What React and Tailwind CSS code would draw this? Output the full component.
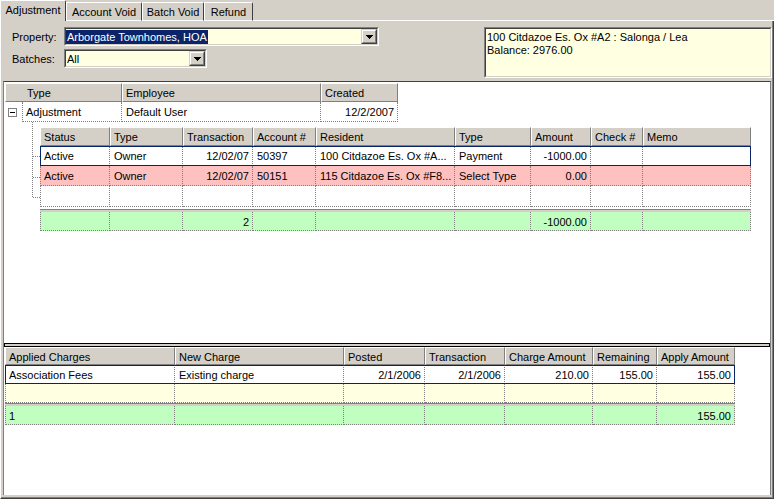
import React from 'react';

const nestedCols = [
  { w: 'w-[70px]', label: 'Status' },
  { w: 'w-[73px]', label: 'Type' },
  { w: 'w-[70px]', label: 'Transaction', right: true },
  { w: 'w-[63px]', label: 'Account #' },
  { w: 'w-[139px]', label: 'Resident' },
  { w: 'w-[76px]', label: 'Type' },
  { w: 'w-[60px]', label: 'Amount', right: true },
  { w: 'w-[52px]', label: 'Check #' },
  { w: 'w-[108px]', label: 'Memo' },
];

const nestedRows = [
  { bg: 'bg-white', sel: true, h: 'h-[20px]', cells: ['Active', 'Owner', '12/02/07', '50397', '100 Citdazoe Es. Ox #A...', 'Payment', '-1000.00', '', ''] },
  { bg: 'bg-[#ffc0c0]', h: 'h-[20px]', cells: ['Active', 'Owner', '12/02/07', '50151', '115 Citdazoe Es. Ox #F8...', 'Select Type', '0.00', '', ''] },
  { bg: 'bg-white', h: 'h-[21px]', cells: ['', '', '', '', '', '', '', '', ''] },
];
const nestedSummary = ['', '', '2', '', '', '', '-1000.00', '', ''];

const lowerCols = [
  { w: 'w-[170px]', label: 'Applied Charges' },
  { w: 'w-[169px]', label: 'New Charge' },
  { w: 'w-[81px]', label: 'Posted', right: true },
  { w: 'w-[80px]', label: 'Transaction', right: true },
  { w: 'w-[88px]', label: 'Charge Amount', right: true },
  { w: 'w-[64px]', label: 'Remaining', right: true },
  { w: 'w-[78px]', label: 'Apply Amount', right: true },
];
const lowerRows = [
  { bg: 'bg-white', sel: true, cells: ['Association Fees', 'Existing charge', '2/1/2006', '2/1/2006', '210.00', '155.00', '155.00'] },
  { bg: 'bg-[#ffffe1]', cells: ['', '', '', '', '', '', ''] },
];
const lowerSummary = ['1', '', '', '', '', '', '155.00'];

function Sunken({ className = '', innerClassName = '', children }) {
  return (
    <div className={`border border-t-[#808080] border-l-[#808080] border-b-white border-r-white ${className}`}>
      <div className={`h-full border border-t-[#404040] border-l-[#404040] border-b-[#d4d0c8] border-r-[#d4d0c8] ${innerClassName}`}>
        {children}
      </div>
    </div>
  );
}

function DropButton() {
  return (
    <div className="w-[16px] h-full shrink-0 border border-t-[#d4d0c8] border-l-[#d4d0c8] border-b-[#404040] border-r-[#404040] bg-[#d4d0c8]">
      <div className="h-full border border-t-white border-l-white border-b-[#808080] border-r-[#808080] flex items-center justify-center">
        <svg width="7" height="4" viewBox="0 0 7 4" shapeRendering="crispEdges">
          <path d="M0 0h7v1H0zM1 1h5v1H1zM2 2h3v1H2zM3 3h1v1H3z" fill="#000" />
        </svg>
      </div>
    </div>
  );
}

function HeaderCell({ w, children, className = '' }) {
  return (
    <div className={`${w} h-full shrink-0 bg-[#d4d0c8] border border-t-white border-l-white border-r-[#808080] border-b-[#808080] pl-[3px] pt-[2px] flex items-center whitespace-nowrap overflow-hidden ${className}`}>
      {children}
    </div>
  );
}

function Cell({ w, first, right, children }) {
  return (
    <div
      className={`${w} h-full shrink-0 border-r border-b border-dotted border-[#808080] ${first ? 'border-l pl-[3px]' : 'pl-[4px]'} pr-[3px] pt-[2px] flex items-center whitespace-nowrap overflow-hidden ${right ? 'justify-end' : ''}`}
    >
      {children}
    </div>
  );
}

function Tab({ w, selected, children }) {
  if (selected) {
    return (
      <div className={`${w} h-[21px] shrink-0 border-l border-t border-r border-l-white border-t-white border-r-[#404040] rounded-tr-[2px] bg-[#d4d0c8] flex items-center justify-center pb-[1px]`}>
        {children}
      </div>
    );
  }
  return (
    <div className={`${w} h-[19px] shrink-0 border-l border-t border-r border-b border-l-white border-t-white border-r-[#404040] border-b-white rounded-tr-[2px] bg-[#d4d0c8] flex items-center justify-center pt-[2px]`}>
      {children}
    </div>
  );
}

export default function App() {
  return (
    <div className="w-[774px] h-[499px] overflow-hidden bg-[#d4d0c8] text-black text-[11px] leading-[13px] font-['Liberation_Sans',Arial,sans-serif]">
      {/* Tabs */}
      <div className="flex items-end h-[21px]">
        <Tab w="w-[66px]" selected>Adjustment</Tab>
        <Tab w="w-[76px]">Account Void</Tab>
        <Tab w="w-[62px]">Batch Void</Tab>
        <Tab w="w-[49px]">Refund</Tab>
        <div className="flex-1 h-[21px] border-b border-white" />
      </div>

      {/* Tab page */}
      <div className="h-[478px] border-l border-r border-b border-l-white border-r-[#404040] border-b-[#404040]">
        <div className="h-full border-r border-b border-[#808080] flex flex-col">
          {/* Top section */}
          <div className="h-[60px] shrink-0 flex pt-[6px]">
            <div className="pl-[11px] flex flex-col gap-[3px]">
              <div className="flex items-center h-[19px]">
                <div className="w-[52px] pt-[2px]">Property:</div>
                <Sunken className="w-[315px] h-[19px]" innerClassName="bg-[#ffffe1] flex">
                  <div className="flex-1 flex items-center">
                    <span className="bg-[#0a246a] text-white pl-[1px] pr-[1px] pt-[1px] leading-[13px]">Arborgate Townhomes, HOA</span>
                  </div>
                  <DropButton />
                </Sunken>
              </div>
              <div className="flex items-center h-[19px]">
                <div className="w-[52px] pt-[2px]">Batches:</div>
                <Sunken className="w-[143px] h-[19px]" innerClassName="bg-[#ffffe1] flex">
                  <div className="flex-1 flex items-center pl-[1px] pt-[2px]">All</div>
                  <DropButton />
                </Sunken>
              </div>
            </div>
            <Sunken className="ml-auto w-[288px] h-[51px]" innerClassName="bg-[#ffffe1] pl-[1px] pt-[2px]">
              <div>100 Citdazoe Es. Ox #A2 : Salonga / Lea</div>
              <div>Balance: 2976.00</div>
            </Sunken>
          </div>

          {/* Panel */}
          <div className="flex-1 ml-[2px] mr-[1px] mb-[2px] border-t border-l border-r border-t-[#404040] border-l-[#808080] border-r-[#808080] bg-white flex flex-col">
            {/* Upper grid */}
            <div className="h-[261px] shrink-0 pl-[1px] pt-[1px]">
              <div className="flex h-[19px]">
                <HeaderCell w="w-[117px]" className="pl-[21px]">Type</HeaderCell>
                <HeaderCell w="w-[199px]">Employee</HeaderCell>
                <HeaderCell w="w-[77px]">Created</HeaderCell>
              </div>
              <div className="flex h-[20px]">
                <div className="w-[17px] h-full shrink-0 flex items-center pl-[3px]">
                  <div className="w-[9px] h-[9px] border border-[#808080] bg-white flex items-center justify-center">
                    <div className="w-[5px] h-[1px] bg-black" />
                  </div>
                </div>
                <Cell w="w-[100px]" first>Adjustment</Cell>
                <Cell w="w-[199px]">Default User</Cell>
                <Cell w="w-[77px]" right>12/2/2007</Cell>
              </div>
              <div className="flex">
                <div className="w-[35px] shrink-0">
                  <svg width="35" height="80" viewBox="0 0 35 80">
                    <g stroke="#808080" strokeWidth="1" strokeDasharray="1 1" shapeRendering="crispEdges" fill="none">
                      <line x1="27.5" y1="0" x2="27.5" y2="76" />
                      <line x1="28" y1="34.5" x2="35" y2="34.5" />
                      <line x1="28" y1="55.5" x2="35" y2="55.5" />
                      <line x1="28" y1="75.5" x2="35" y2="75.5" />
                    </g>
                  </svg>
                </div>
                <div className="mt-[5px] w-[711px]">
                  <div className="flex h-[19px]">
                    {nestedCols.map((c, i) => (
                      <HeaderCell key={i} w={c.w}>{c.label}</HeaderCell>
                    ))}
                  </div>
                  {nestedRows.map((r, ri) => (
                    <div key={ri} className={`relative flex ${r.h} ${r.bg}`}>
                      {r.cells.map((t, i) => (
                        <Cell key={i} w={nestedCols[i].w} first={i === 0} right={nestedCols[i].right}>{t}</Cell>
                      ))}
                      {r.sel && <div className="absolute inset-0 border border-[#0a246a] pointer-events-none" />}
                    </div>
                  ))}
                  <div className="mt-[2px] h-[3px] border-t border-[#808080] bg-[#d4d0c8]" />
                  <div className="flex h-[19px] bg-[#c0ffc0]">
                    {nestedSummary.map((t, i) => (
                      <Cell key={i} w={nestedCols[i].w} first={i === 0} right={nestedCols[i].right}>{t}</Cell>
                    ))}
                  </div>
                </div>
              </div>
            </div>

            {/* Splitter */}
            <div className="h-[4px] shrink-0 border border-black bg-[#d4d0c8]" />

            {/* Lower grid */}
            <div className="flex-1 pl-[1px]">
              <div className="w-[730px]">
                <div className="flex h-[18px]">
                  {lowerCols.map((c, i) => (
                    <HeaderCell key={i} w={c.w}>{c.label}</HeaderCell>
                  ))}
                </div>
                {lowerRows.map((r, ri) => (
                  <div key={ri} className={`relative flex h-[19px] ${r.bg}`}>
                    {r.cells.map((t, i) => (
                      <Cell key={i} w={lowerCols[i].w} first={i === 0} right={lowerCols[i].right}>{t}</Cell>
                    ))}
                    {r.sel && <div className="absolute inset-0 border border-[#0a246a] pointer-events-none" />}
                  </div>
                ))}
                <div className="h-[3px] border-t border-[#808080] bg-[#d4d0c8]" />
                <div className="flex h-[19px] bg-[#c0ffc0]">
                  {lowerSummary.map((t, i) => (
                    <Cell key={i} w={lowerCols[i].w} first={i === 0} right={lowerCols[i].right}>{t}</Cell>
                  ))}
                </div>
              </div>
            </div>
          </div>
        </div>
      </div>
    </div>
  );
}
